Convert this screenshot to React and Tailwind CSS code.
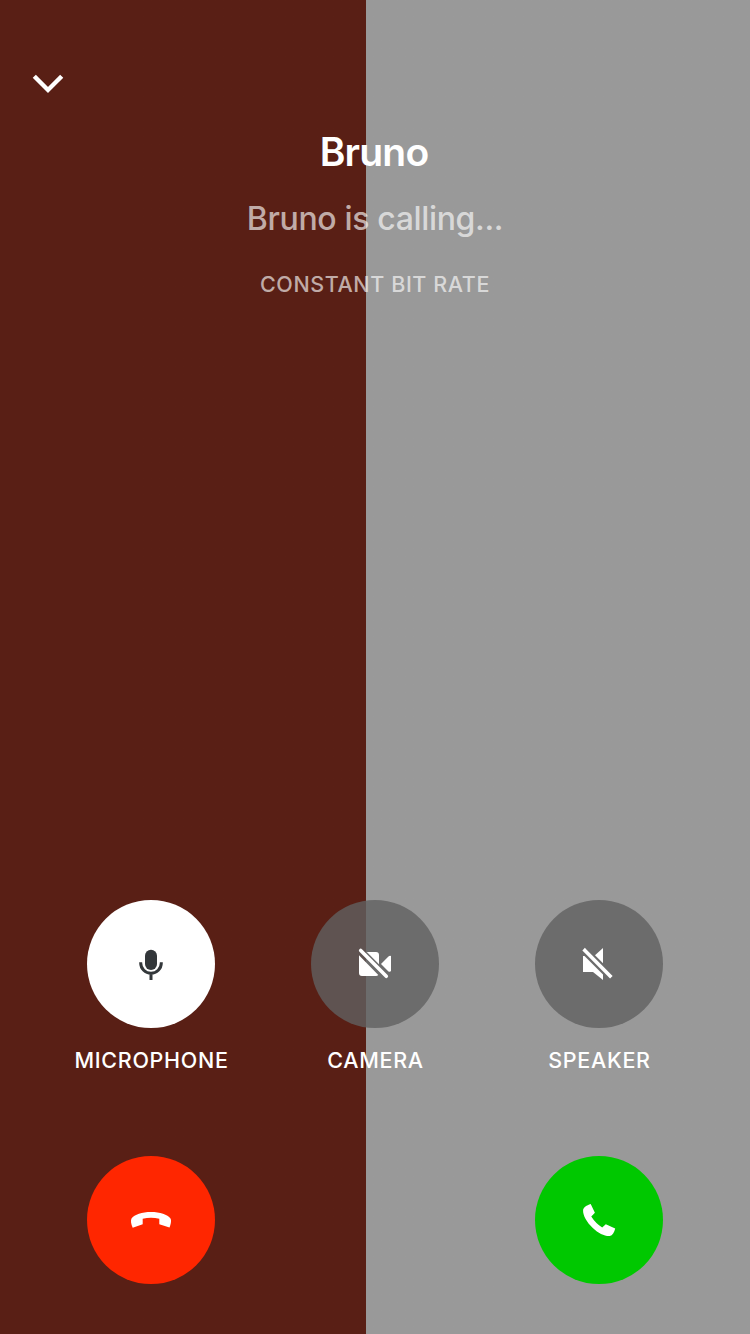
function Mic() {
  return (
    <svg className="size-15" viewBox="1 -1 60 60" fill="none">
      <rect x="25" y="14.7" width="12" height="20.3" rx="6" fill="#33373a" />
      <path d="M20.7 27.3V28a10.3 10.3 0 0 0 20.6 0v-.7M31 38.5V45" stroke="#33373a" strokeWidth="3" />
    </svg>
  );
}

function CameraOff() {
  return (
    <svg className="size-15" viewBox="0 -1 60 60" fill="none">
      <path
        fill="#fff"
        d="M14 20.3 L33.3 39.9 Q32.3 41 31 41H17Q14 41 14 38ZM21.8 17H31Q34 17 34 20V29.3ZM36 29 L43.2 21.7Q44.5 20.5 46 21V36Q45 37.5 43.2 36.3L36 29Z"
      />
      <path d="M15.7 15.5 41.3 41.3" stroke="#fff" strokeWidth="3.6" strokeLinecap="round" />
    </svg>
  );
}

function SpeakerOff() {
  return (
    <svg className="size-15" viewBox="-1 -1 60 60" fill="none">
      <path fill="#fff" d="M13 21H14.5L33 39.5V45L23 37H13ZM33 13V28.3L25 20.3Z" />
      <path d="M14.9 15.4 40.1 40.9" stroke="#fff" strokeWidth="3.6" strokeLinecap="square" />
    </svg>
  );
}

function HangUp() {
  return (
    <svg className="size-15" viewBox="1 0 60 60">
      <path
        fill="#fff"
        d="M31 22C40 22 47.5 24.5 50.5 28.5C51.5 30 51.1 34 49.5 37.5L39.3 34.3V28.8Q31 26.7 22.7 28.8V34.3L12.7 37.7C11 34 10.5 30.5 11.5 28.5C14.5 24.5 22 22 31 22Z"
      />
    </svg>
  );
}

function Phone() {
  return (
    <svg className="size-15" viewBox="-1 0 60 60">
      <path
        fill="#fff"
        d="M20.7 14C16.5 15.3 13.5 17.5 13.1 20C12.7 25.5 17 32.5 22.8 38C28.5 43.5 34.5 46.3 39.8 46C42.5 45.5 44.3 42.5 45.2 38.5L35.8 34.2L32.2 37.5Q25.5 33.3 21.3 26.5L24.9 22.8Z"
      />
    </svg>
  );
}

function Control({ icon, label, className }) {
  return (
    <div className="flex w-56 flex-col items-center">
      <button aria-label={label} className={`flex size-32 items-center justify-center rounded-full ${className}`}>
        {icon}
      </button>
      <span className="mt-[18px] ml-px text-[21.5px] leading-7 font-[550] tracking-[0.7px] whitespace-nowrap text-white">{label}</span>
    </div>
  );
}

export default function App() {
  return (
    <main className="flex h-[1334px] w-[750px] flex-col bg-linear-to-r from-[#591f15] from-[366px] to-[#999999] to-[366px] font-['Inter',sans-serif]">
      <header className="flex h-[118px] pt-[60px] pl-5">
        <svg className="h-[50px] w-[60px]" viewBox="0 0 60 50" fill="none">
          <path d="M14.3 16.3 28 30l13.7-13.7" stroke="#fff" strokeWidth="4.4" />
        </svg>
      </header>
      <section className="flex flex-col items-center">
        <h1 className="mt-[10px] mr-[2px] text-[39px] leading-[48px] font-semibold tracking-[-0.8px] text-white">Bruno</h1>
        <p className="mt-[23px] text-[32px] leading-10 font-[550] tracking-[-0.35px] text-white/64">Bruno is calling...</p>
        <p className="mt-[31px] text-[21.5px] leading-7 font-[550] tracking-[0.6px] text-white/64">CONSTANT BIT RATE</p>
      </section>
      <section className="mt-auto flex pl-[39px]">
        <Control icon={<Mic />} label="MICROPHONE" className="bg-white" />
        <Control icon={<CameraOff />} label="CAMERA" className="bg-[#606060]/80" />
        <Control icon={<SpeakerOff />} label="SPEAKER" className="bg-[#606060]/80" />
      </section>
      <footer className="mt-[82px] mb-[50px] flex justify-between px-[87px]">
        <button aria-label="Decline" className="flex size-32 items-center justify-center rounded-full bg-[#ff2600]">
          <HangUp />
        </button>
        <button aria-label="Accept" className="flex size-32 items-center justify-center rounded-full bg-[#00c800]">
          <Phone />
        </button>
      </footer>
    </main>
  );
}
